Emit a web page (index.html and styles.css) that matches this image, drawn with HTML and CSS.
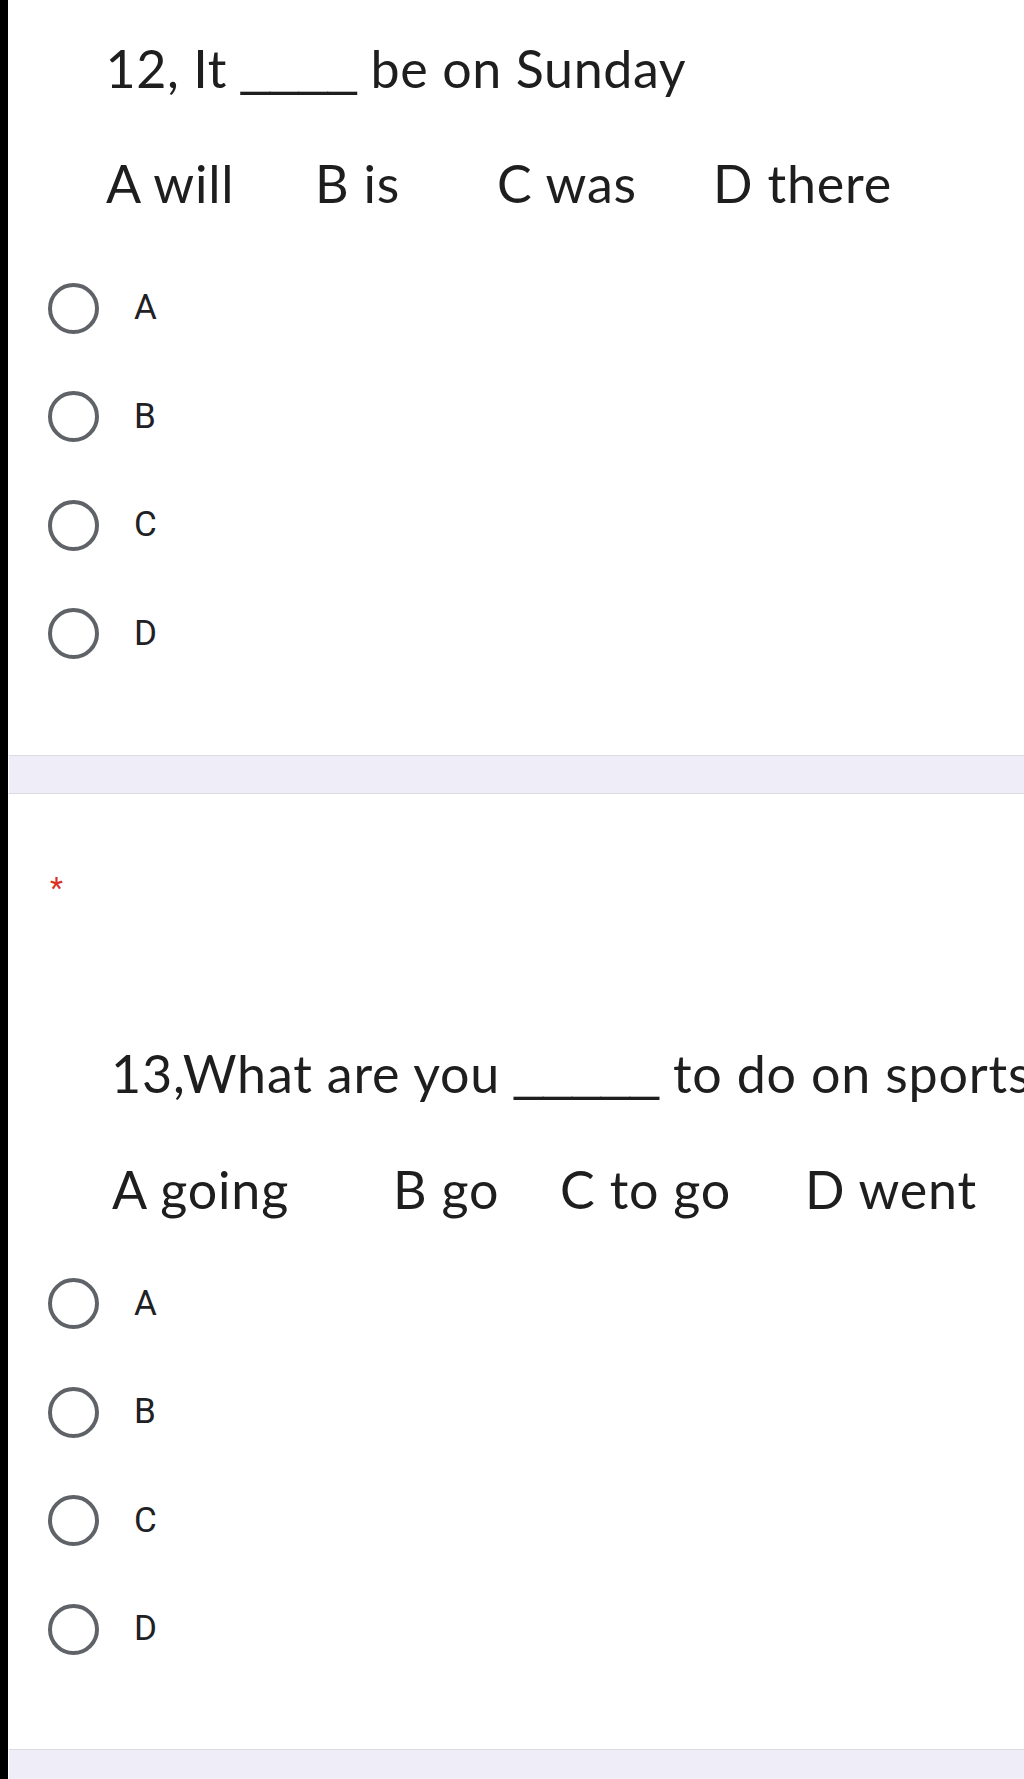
FILE: index.html
```html
<!DOCTYPE html>
<html lang="en">
<head>
<meta charset="utf-8">
<title>Quiz</title>
<link rel="stylesheet" href="styles.css">
</head>
<body>
<div class="edge"></div>
<main class="page">
  <section class="card card-first">
    <p class="q-line q12">12, It <span class="blank">____</span> be on Sunday</p>
    <p class="choices c12"><span>A will</span><span>B is</span><span>C was</span><span>D there</span></p>
    <div class="radios r12">
      <label class="opt"><span class="radio"></span><span class="opt-label">A</span></label>
      <label class="opt"><span class="radio"></span><span class="opt-label">B</span></label>
      <label class="opt"><span class="radio"></span><span class="opt-label">C</span></label>
      <label class="opt"><span class="radio"></span><span class="opt-label">D</span></label>
    </div>
  </section>
  <div class="gap"></div>
  <section class="card card-second">
    <div class="req">*</div>
    <p class="q-line q13">13,What are you <span class="blank">_____</span> to do on sports</p>
    <p class="choices c13"><span>A going</span><span>B go</span><span>C to go</span><span>D went</span></p>
    <div class="radios r13">
      <label class="opt"><span class="radio"></span><span class="opt-label">A</span></label>
      <label class="opt"><span class="radio"></span><span class="opt-label">B</span></label>
      <label class="opt"><span class="radio"></span><span class="opt-label">C</span></label>
      <label class="opt"><span class="radio"></span><span class="opt-label">D</span></label>
    </div>
  </section>
  <div class="gap gap-end"></div>
</main>
</body>
</html>
```

FILE: styles.css
```css
html, body {
  margin: 0;
  height: 1779px;
  overflow: hidden;
}

body {
  display: flex;
  background: #ffffff;
}

.edge {
  width: 8px;
  flex: none;
  background: #000000;
}

.page {
  flex: 1;
  min-width: 0;
  display: flex;
  flex-direction: column;
  padding-left: 1px;
  background: #ffffff;
  overflow: hidden;
}

.card {
  flex: none;
  background: #ffffff;
  display: flex;
  flex-direction: column;
  overflow: hidden;
}

.card-first {
  height: 717px;
  padding-top: 38px;
  border-bottom: 1px solid #dadce0;
}

.card-second {
  height: 881.3px;
  padding-top: 73.7px;
  border-top: 1px solid #dadce0;
  border-bottom: 1px solid #dadce0;
}

.gap {
  flex: none;
  height: 37px;
  background: #efedf8;
}

.gap-end {
  flex: 1;
}

.q-line,
.choices {
  margin: 0;
  font-family: Lato, "Liberation Sans", sans-serif;
  font-size: 52px;
  letter-spacing: 0.8px;
  line-height: 60px;
  height: 60px;
  color: #1e1e1e;
  white-space: nowrap;
}

.q12 {
  letter-spacing: 0.6px;
}

.blank {
  font-family: "Liberation Sans", Arial, sans-serif;
  font-size: 52px;
  letter-spacing: 0;
  vertical-align: 3px;
  line-height: 1;
}

.choices {
  display: grid;
}

.q12 {
  margin-left: 96.5px;
}

.c12 {
  margin-top: 55px;
  margin-left: 97px;
  grid-template-columns: 209px 182px 216px auto;
}

.r12 {
  margin-top: 40.75px;
}

.req {
  margin-left: 41px;
  font-family: Roboto, "Liberation Sans", sans-serif;
  font-size: 30px;
  line-height: 40px;
  height: 40px;
  color: #d93025;
}

.q13 {
  margin-top: 134.9px;
  margin-left: 102px;
}

.c13 {
  margin-top: 56px;
  margin-left: 103px;
  grid-template-columns: 281px 167px 245px auto;
}

.r13 {
  margin-top: 31.15px;
}

.radios {
  display: flex;
  flex-direction: column;
  margin-left: 39px;
}

.opt {
  display: flex;
  align-items: center;
  height: 108.5px;
}

.radio {
  box-sizing: border-box;
  width: 51px;
  height: 51px;
  flex: none;
  border: 4.5px solid #5f6368;
  border-radius: 50%;
}

.opt-label {
  margin-left: 35px;
  font-family: Roboto, "Liberation Sans", sans-serif;
  font-size: 35px;
  line-height: 42px;
  color: #202124;
}
```
